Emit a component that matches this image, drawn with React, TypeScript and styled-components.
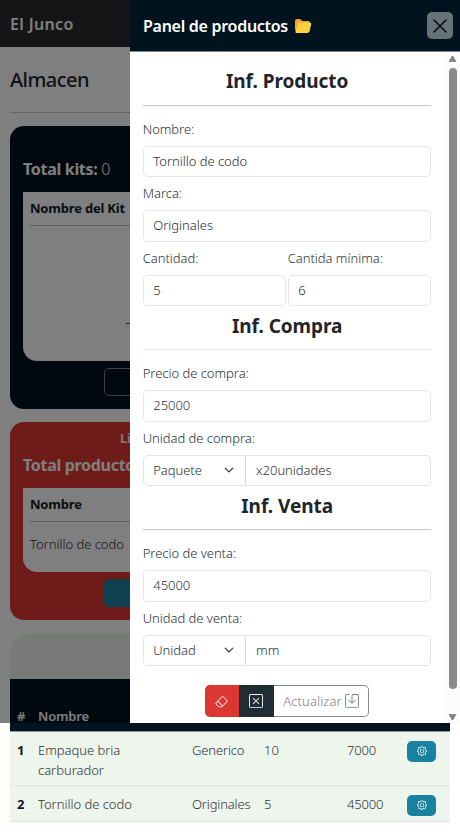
import React from 'react';
import styled, { createGlobalStyle } from 'styled-components';
import { BsEraser, BsXSquare, BsSave, BsGear } from 'react-icons/bs';

const GlobalStyle = createGlobalStyle`
  *, *::before, *::after { box-sizing: border-box; }
  html, body { margin: 0; padding: 0; background: #fff; overflow: hidden; }
  body { font-family: 'Noto Sans', 'Open Sans', sans-serif; font-size: 13px; font-weight: 360; line-height: 20px; letter-spacing: -0.03px; color: #2a3035; }
  h1, h2, h3, p { margin: 0; }
  input, select, button { font: inherit; color: inherit; letter-spacing: inherit; margin: 0; }
`;

const Page = styled.div`
  position: relative;
  width: 460px;
  height: 835px;
  overflow: hidden;
`;

const Fit = styled.span<{ $ls?: number }>`
  letter-spacing: ${(p) => p.$ls ?? 0}px;
  white-space: nowrap;
`;

const Navbar = styled.header`
  height: 47px;
  padding-left: 10px;
  display: flex;
  align-items: center;
  background: #272a2e;
  color: #fff;
  font-size: 16px;
  font-weight: 600;
`;

const Main = styled.main`
  padding: 0 10px;
  display: flex;
  flex-direction: column;
`;

const PageTitle = styled.h1`
  height: 66px;
  border-bottom: 1px solid #cacaca;
  font-size: 20px;
  font-weight: 460;
  line-height: 66px;
  color: #212529;
`;

const Card = styled.section<{ $bg: string; $h: number; $mt: number; $pt: number }>`
  height: ${(p) => p.$h}px;
  margin-top: ${(p) => p.$mt}px;
  padding: ${(p) => p.$pt}px 13px 0;
  display: flex;
  flex-direction: column;
  border-radius: 14px;
  background: ${(p) => p.$bg};
`;

const CardCaption = styled.p`
  padding-left: 97px;
  height: 16px;
  line-height: 15px;
  font-size: 13px;
  font-weight: 600;
  color: #fff;
`;

const CardTotal = styled.p<{ $mt: number; $mb: number }>`
  margin: ${(p) => `${p.$mt}px 0 ${p.$mb}px`};
  height: 20px;
  font-size: 16px;
  letter-spacing: -0.3px;
  color: #fff;
  white-space: nowrap;
  b { font-weight: 700; }
`;

const Panel = styled.div<{ $h: number }>`
  height: ${(p) => p.$h}px;
  padding: 0 7px;
  border-radius: 0 0 14px 14px;
  background: #fff;
  overflow: hidden;
`;

const PanelHead = styled.div`
  height: 34px;
  line-height: 33px;
  border-bottom: 1px solid #b8bcc0;
  font-weight: 700;
  letter-spacing: -0.2px;
  color: #101820;
`;

const PanelRow = styled.div`
  height: 46px;
  line-height: 45px;
`;

const PanelDash = styled.div`
  margin: 97px 0 0 96px;
  width: 100px;
  height: 1px;
  background: #40464c;
`;

const CardButton = styled.button<{ $bg: string; $line: string }>`
  margin: 7px 0 0 81px;
  width: 224px;
  height: 28px;
  border: 1px solid ${(p) => p.$line};
  border-radius: 5px;
  background: ${(p) => p.$bg};
`;

const TableCard = styled.section`
  margin-top: 13.5px;
  padding-top: 45px;
  border-radius: 20px 20px 0 0;
  background: #eef5ec;
`;

const TableRow = styled.div<{ $h: number; $head?: boolean }>`
  height: ${(p) => p.$h}px;
  padding: ${(p) => (p.$head ? 27 : 8)}px 0 0 7px;
  display: grid;
  grid-template-columns: 21px 154px 72px 83px 60px 1fr;
  align-items: start;
  border-bottom: 1px solid ${(p) => (p.$head ? '#8b989c' : '#dee5e0')};
  background: ${(p) => (p.$head ? '#00131f' : '#eef5ec')};
  color: ${(p) => (p.$head ? '#fff' : '#2a3236')};
  font-weight: ${(p) => (p.$head ? 600 : 360)};
`;

const RowNumber = styled.span`
  font-weight: 700;
  color: #10191f;
`;

const GearButton = styled.button`
  margin-top: 1px;
  width: 29px;
  height: 21px;
  padding: 0;
  display: grid;
  place-items: center;
  border: 0;
  border-radius: 5px;
  background: #1a829e;
  color: #fff;
`;

const Backdrop = styled.div`
  position: absolute;
  inset: 0 0 auto;
  height: 723px;
  background: rgba(0, 0, 0, 0.5);
`;

const Drawer = styled.aside`
  position: absolute;
  top: 0;
  right: 0;
  width: 330.5px;
  height: 723px;
  display: flex;
  flex-direction: column;
  background: #fff;
`;

const DrawerHeader = styled.header`
  flex: none;
  height: 52px;
  padding: 0 7px 0 13.5px;
  display: flex;
  align-items: center;
  border-bottom: 1px solid #7b858b;
  background: #00131f;
  color: #fff;
  font-size: 16px;
  font-weight: 600;
  svg { flex: none; }
`;

const CloseButton = styled.button`
  margin-left: auto;
  width: 26px;
  height: 27px;
  padding: 0;
  display: grid;
  place-items: center;
  border: 0;
  border-radius: 5px;
  background: #667478;
`;

const DrawerBody = styled.div`
  flex: 1;
  display: flex;
`;

const Form = styled.form`
  width: 301.2px;
  padding-left: 13.2px;
  display: flex;
  flex-direction: column;
`;

const Heading = styled.h2<{ $h: number; $lh: number; $line?: string }>`
  flex: none;
  height: ${(p) => p.$h}px;
  line-height: ${(p) => p.$lh}px;
  padding-left: 1px;
  border-bottom: 1px solid ${(p) => p.$line ?? '#c4c6c8'};
  text-align: center;
  font-size: 19px;
  font-weight: 700;
  letter-spacing: -0.05px;
  color: #212529;
`;

const Label = styled.label<{ $first?: boolean }>`
  display: block;
  height: ${(p) => (p.$first ? 40 : 33)}px;
  padding-top: ${(p) => (p.$first ? 13 : 6.1)}px;
`;

const Input = styled.input`
  display: block;
  width: 100%;
  min-width: 0;
  height: 31.3px;
  padding: 0 10px 1px 9.6px;
  border: 1px solid #e4e7e9;
  border-radius: 5px;
  outline: 0;
  background: #fff;
`;

const Pair = styled.div`
  display: grid;
  grid-template-columns: 143px 143px;
  gap: 2px;
`;

const Group = styled.div`
  height: 31.3px;
  display: grid;
  grid-template-columns: 102.4px 1fr;
  border: 1px solid #e1e5e7;
  border-radius: 5px;
  overflow: hidden;
`;

const Select = styled.div`
  padding: 0 11px 0 9.5px;
  display: flex;
  align-items: center;
  justify-content: space-between;
  border-right: 1px solid #dadddf;
`;

const GroupInput = styled.input`
  min-width: 0;
  padding: 0 10px;
  border: 0;
  outline: 0;
  background: transparent;
`;

const Actions = styled.div`
  margin: 19.4px 0 0 62.3px;
  width: 164px;
  height: 32px;
  display: flex;
  border-radius: 5px;
`;

const Action = styled.button<{ $w: number; $kind: 'danger' | 'dark' | 'plain' }>`
  width: ${(p) => p.$w}px;
  padding: 0;
  display: flex;
  align-items: center;
  justify-content: center;
  gap: 3px;
  border: ${(p) => (p.$kind === 'plain' ? '1px solid #85898c' : '0')};
  border-left: 0;
  border-radius: ${(p) => ({ danger: '5px 0 0 5px', dark: '0', plain: '0 5px 5px 0' })[p.$kind]};
  background: ${(p) => ({ danger: '#dc3733', dark: '#212d35', plain: '#fff' })[p.$kind]};
  color: ${(p) => (p.$kind === 'plain' ? '#7c8083' : '#fff')};
  letter-spacing: 0.1px;
`;

const Scrollbar = styled.div`
  margin-left: auto;
  width: 15px;
  padding: 4px 0 3px;
  display: flex;
  flex-direction: column;
  align-items: center;
  background: #fcfcfc;
`;

const Arrow = styled.i<{ $down?: boolean }>`
  width: 8px;
  height: 6px;
  background: #858585;
  clip-path: ${(p) => (p.$down ? 'polygon(0 0, 100% 0, 60% 100%, 40% 100%)' : 'polygon(40% 0, 60% 0, 100% 100%, 0 100%)')};
`;

const Thumb = styled.div`
  margin: 6px 0 auto;
  width: 8px;
  height: 621px;
  border-radius: 4px;
  background: #8b8b8b;
`;

const FolderIcon = styled.svg`
  margin-left: 6px;
`;

const Folder = () => (
  <FolderIcon width="18" height="16" viewBox="0 0 18 16">
    <path d="M1 3Q1 1 3 1h3l2.2 2H14q2 0 2 2v8H3q-2 0-2-2z" fill="#f6a52c" />
    <path d="M5.8 4.6H16q1.700 0 1.200 1.700l-1.600 6.800Q15.200 15 13.400 15H2.500Q1 15 1.500 13.400l2.300-7.200Q4.300 4.600 5.800 4.600z" fill="#ffd13c" />
  </FolderIcon>
);

const Chevron = () => (
  <svg width="10" height="10" viewBox="0 0 16 16" fill="none" stroke="#343a40" strokeWidth="2.1" strokeLinecap="round" strokeLinejoin="round">
    <path d="m2 5 6 6 6-6" />
  </svg>
);

const CloseIcon = () => (
  <svg width="14" height="14" viewBox="0 0 14 14" stroke="#080c0e" strokeWidth="1.6" strokeLinecap="round">
    <path d="m1 1 12 12M13 1 1 13" />
  </svg>
);

const products = [
  { lines: ['Empaque bria', 'carburador'], brand: 'Generico', qty: 10, price: 7000, height: 54 },
  { lines: ['Tornillo de codo'], brand: 'Originales', qty: 5, price: 45000, height: 36 },
];

function Inventory() {
  return (
    <>
      <Navbar><Fit $ls={0.35}>El Junco</Fit></Navbar>
      <Main>
        <PageTitle><Fit $ls={-0.55}>Almacen</Fit></PageTitle>
        <Card $bg="#00131f" $h={282.5} $mt={13} $pt={0}>
          <CardTotal $mt={33} $mb={13}><b>Total kits:</b> 0</CardTotal>
          <Panel $h={168.5}>
            <PanelHead>Nombre del Kit</PanelHead>
            <PanelDash />
          </Panel>
          <CardButton $bg="transparent" $line="#7d878c" />
        </Card>
        <Card $bg="#dc3733" $h={198.5} $mt={13.3} $pt={9}>
          <CardCaption>Lista</CardCaption>
          <CardTotal $mt={8.5} $mb={13}><b>Total productos:</b></CardTotal>
          <Panel $h={84}>
            <PanelHead>Nombre</PanelHead>
            <PanelRow>Tornillo de codo</PanelRow>
          </Panel>
          <CardButton $bg="#1a829e" $line="#1a829e" />
        </Card>
        <TableCard>
          <TableRow $h={53} $head>
            <span>#</span>
            <Fit $ls={-0.15}>Nombre</Fit>
          </TableRow>
          {products.map((item, i) => (
            <TableRow key={item.brand} $h={item.height}>
              <RowNumber>{i + 1}</RowNumber>
              <span>{item.lines.map((line) => <div key={line}>{line}</div>)}</span>
              <Fit $ls={-0.15}>{item.brand}</Fit>
              <span>{item.qty}</span>
              <Fit $ls={-0.2}>{item.price}</Fit>
              <GearButton><BsGear size={10} /></GearButton>
            </TableRow>
          ))}
        </TableCard>
      </Main>
    </>
  );
}

function ProductDrawer() {
  return (
    <Drawer>
      <DrawerHeader>
        <Fit $ls={-0.28}>Panel de productos</Fit>
        <Folder />
        <CloseButton type="button" aria-label="Cerrar"><CloseIcon /></CloseButton>
      </DrawerHeader>
      <DrawerBody>
        <Form>
          <Heading $h={54} $lh={58}>Inf. Producto</Heading>
          <Label $first>Nombre:</Label>
          <Input defaultValue="Tornillo de codo" />
          <Label>Marca:</Label>
          <Input defaultValue="Originales" />
          <Pair>
            <div><Label>Cantidad:</Label><Input defaultValue="5" /></div>
            <div><Label>Cantida mínima:</Label><Input defaultValue="6" /></div>
          </Pair>
          <Heading $h={44.4} $lh={40} $line="#e5e6e7">Inf. Compra</Heading>
          <Label $first>Precio de compra:</Label>
          <Input defaultValue="25000" />
          <Label>Unidad de compra:</Label>
          <Group>
            <Select>Paquete<Chevron /></Select>
            <GroupInput defaultValue="x20unidades" />
          </Group>
          <Heading $h={44.4} $lh={40}>Inf. Venta</Heading>
          <Label $first>Precio de venta:</Label>
          <Input defaultValue="45000" />
          <Label>Unidad de venta:</Label>
          <Group>
            <Select>Unidad<Chevron /></Select>
            <GroupInput defaultValue="mm" />
          </Group>
          <Actions>
            <Action type="button" $w={34} $kind="danger"><BsEraser size={13} /></Action>
            <Action type="button" $w={35} $kind="dark"><BsXSquare size={14} /></Action>
            <Action type="button" $w={95} $kind="plain">Actualizar<BsSave size={14} /></Action>
          </Actions>
        </Form>
        <Scrollbar>
          <Arrow />
          <Thumb />
          <Arrow $down />
        </Scrollbar>
      </DrawerBody>
    </Drawer>
  );
}

export default function App() {
  return (
    <Page>
      <GlobalStyle />
      <Inventory />
      <Backdrop />
      <ProductDrawer />
    </Page>
  );
}
